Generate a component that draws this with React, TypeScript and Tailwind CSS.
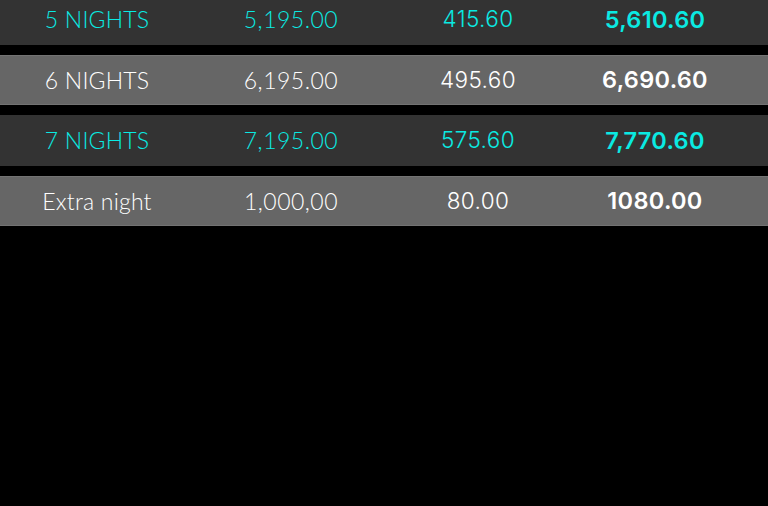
const rows = [
  { label: '5 NIGHTS', rate: '5,195.00', tax: '415.60', total: '5,610.60', dark: true },
  { label: '6 NIGHTS', rate: '6,195.00', tax: '495.60', total: '6,690.60', dark: false },
  { label: '7 NIGHTS', rate: '7,195.00', tax: '575.60', total: '7,770.60', dark: true },
  { label: 'Extra night', rate: '1,000,00', tax: '80.00', total: '1080.00', dark: false },
];

export default function App() {
  return (
    <div className="h-[506px] w-[768px] overflow-hidden bg-black">
      <div className="-mt-[6px] flex flex-col gap-[10px]">
        {rows.map((r) => (
          <div
            key={r.label}
            className={
              'grid h-[50.5px] grid-cols-[194px_194px_180px_174px_1fr] items-center text-center ' +
              (r.dark ? 'bg-[#333333] text-[#0aeae2]' : 'border-y border-[#737373] bg-[#666666] text-white')
            }
          >
            <div className="font-['Lato',sans-serif] text-[23px] font-light tracking-[0.2px]">{r.label}</div>
            <div className="font-['Lato',sans-serif] text-[23px] font-light tracking-[0.5px]">{r.rate}</div>
            <div className="font-['Inter',sans-serif] text-[22.5px] font-light tracking-[0.4px]">{r.tax}</div>
            <div className="font-['Inter',sans-serif] text-[23.5px] font-semibold tracking-[0.3px]">{r.total}</div>
            <div />
          </div>
        ))}
      </div>
    </div>
  );
}
